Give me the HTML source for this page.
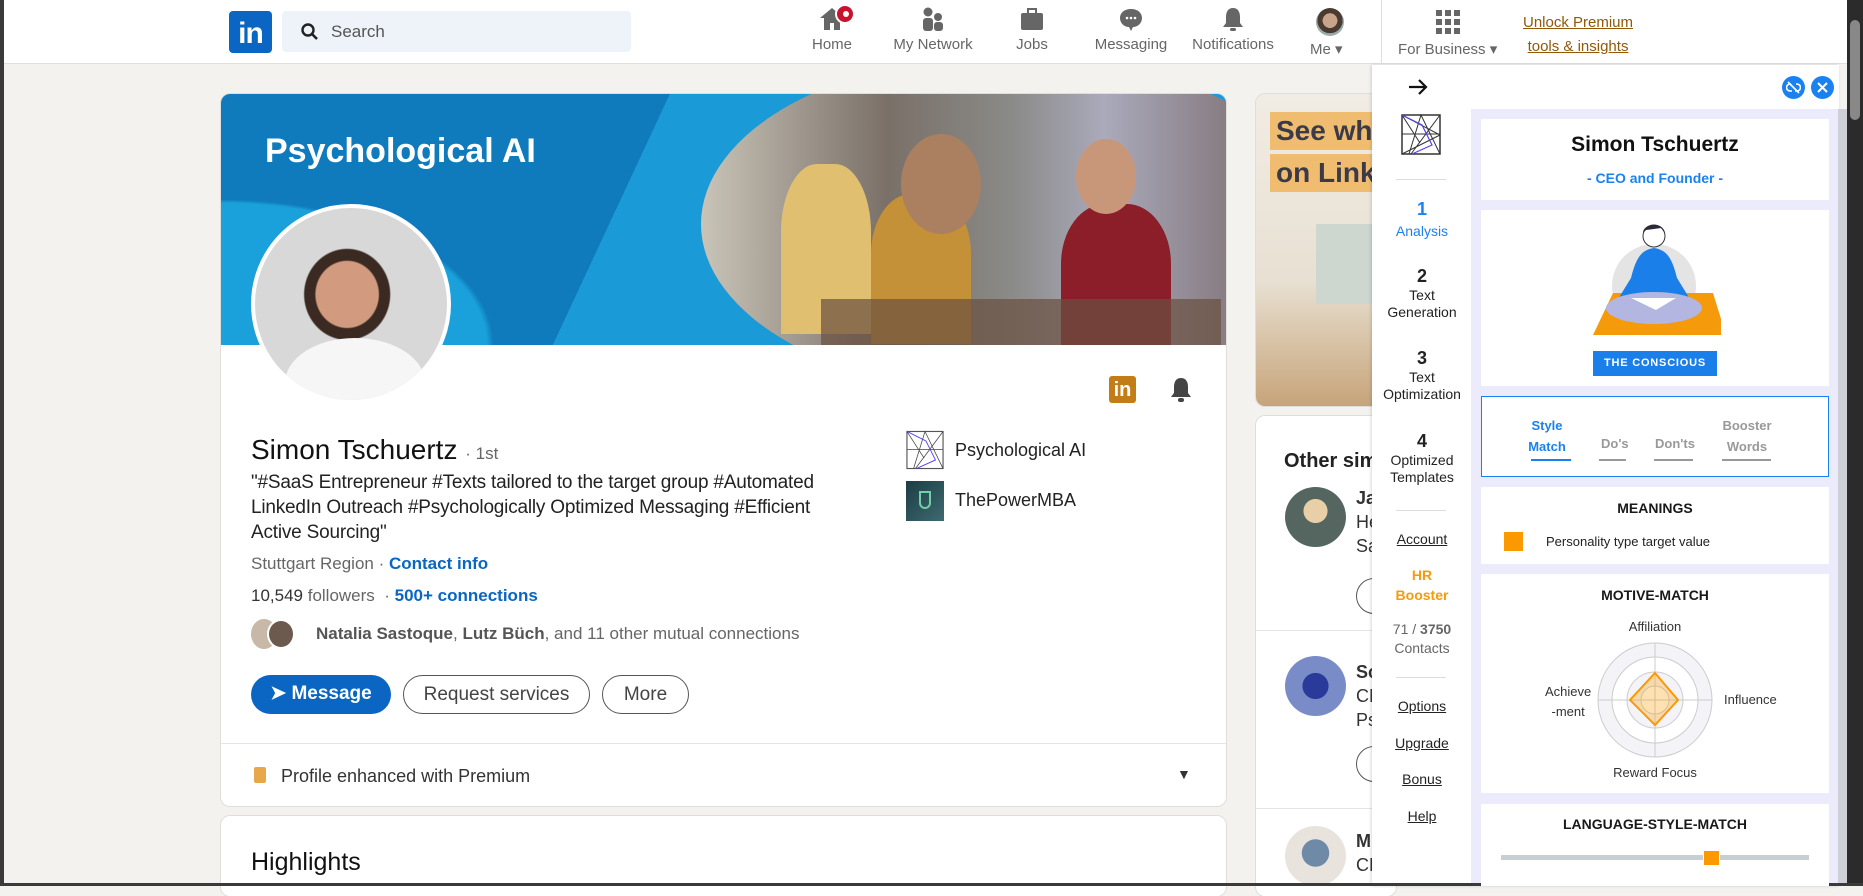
<!DOCTYPE html>
<html><head><meta charset="utf-8"><style>
*{box-sizing:border-box;margin:0;padding:0}
body{width:1863px;height:886px;overflow:hidden;background:#f4f2ee;font-family:"Liberation Sans",sans-serif;position:relative;color:#191919}
.a{position:absolute}
.nav{left:0;top:0;width:1847px;height:64px;background:#fff;border-bottom:1px solid #e0dfdc}
.ni{position:absolute;top:6px;width:90px;text-align:center;font-size:15px;color:#666}
.ni svg{display:block;margin:0 auto 4px}
.card{background:#fff;border-radius:9px;box-shadow:0 0 0 1px #dfdeda}
.btn{position:absolute;top:675px;height:39px;border-radius:20px;font-size:19px;font-weight:bold;line-height:37px;text-align:center}
.sb{position:absolute;left:1372px;width:100px;text-align:center;font-size:14px;color:#222}
.sb u{text-decoration:underline}
.pc{position:absolute;left:1481px;width:348px;background:#fff}
.t{position:absolute;width:100%;text-align:center;font-weight:bold;font-size:15px}
</style></head><body>
<div class="a nav"></div>
<div class="a" style="left:0;top:0;width:4px;height:886px;background:#3a3a3a"></div>
<div class="a" style="left:229px;top:11px;width:43px;height:42px;background:#0a66c2;border-radius:4px;color:#fff;font-weight:bold;font-size:30px;line-height:46px;text-align:center;letter-spacing:-1px">in</div>
<div class="a" style="left:282px;top:11px;width:349px;height:41px;background:#edf3f8;border-radius:4px"></div>
<svg class="a" style="left:300px;top:22px" width="20" height="20" viewBox="0 0 20 20"><circle cx="8" cy="8" r="5.5" fill="none" stroke="#222" stroke-width="2.4"/><path d="M12 12l5 5" stroke="#222" stroke-width="2.6"/></svg>
<div class="a" style="left:331px;top:22px;font-size:17px;color:#555">Search</div>
<div class="ni" style="left:787px"><svg width="28" height="26" viewBox="0 0 28 26"><path d="M14 2L2 12h4v12h6v-7h4v7h6V12h4z" fill="#666"/></svg>Home</div>
<div class="a" style="left:835px;top:4px;width:20px;height:20px;border-radius:50%;background:#cb112d;border:2px solid #fff"></div>
<div class="a" style="left:843px;top:11px;width:6px;height:6px;border-radius:50%;background:#fff"></div>
<div class="ni" style="left:888px"><svg width="28" height="26" viewBox="0 0 28 26"><circle cx="9" cy="6" r="4.5" fill="#666"/><circle cx="19" cy="11" r="4" fill="#666"/><rect x="4" y="12" width="10" height="13" rx="3" fill="#666"/><rect x="15" y="16" width="9" height="9" rx="3" fill="#666"/></svg>My Network</div>
<div class="ni" style="left:987px"><svg width="28" height="26" viewBox="0 0 28 26"><rect x="3" y="7" width="22" height="17" rx="2" fill="#666"/><rect x="10" y="3" width="8" height="5" fill="none" stroke="#666" stroke-width="2"/></svg>Jobs</div>
<div class="ni" style="left:1086px"><svg width="28" height="26" viewBox="0 0 28 26"><path d="M14 3C7 3 3 7 3 12s4 9 9 9l2 4 2-4c5 0 9-4 9-9s-4-9-11-9z" fill="#666"/><circle cx="10" cy="12" r="1.3" fill="#fff"/><circle cx="14" cy="12" r="1.3" fill="#fff"/><circle cx="18" cy="12" r="1.3" fill="#fff"/></svg>Messaging</div>
<div class="ni" style="left:1187px;width:92px"><svg width="28" height="26" viewBox="0 0 28 26"><path d="M14 2c-5 0-7 4-7 9v6l-3 4h20l-3-4v-6c0-5-2-9-7-9z" fill="#666"/><rect x="11" y="22" width="6" height="3" rx="1.5" fill="#666"/></svg>Notifications</div>
<div class="a" style="left:1316px;top:8px;width:28px;height:28px;border-radius:50%;background:radial-gradient(circle at 50% 45%,#c9a48c 0 35%,#4a3a30 36% 60%,#9aa 61%)"></div>
<div class="a" style="left:1310px;top:40px;font-size:15px;color:#666">Me &#9662;</div>
<div class="a" style="left:1381px;top:0;width:1px;height:64px;background:#e0dfdc"></div>
<svg class="a" style="left:1436px;top:10px" width="24" height="24" viewBox="0 0 24 24" fill="#666"><rect x="0" y="0" width="6" height="6"/><rect x="9" y="0" width="6" height="6"/><rect x="18" y="0" width="6" height="6"/><rect x="0" y="9" width="6" height="6"/><rect x="9" y="9" width="6" height="6"/><rect x="18" y="9" width="6" height="6"/><rect x="0" y="18" width="6" height="6"/><rect x="9" y="18" width="6" height="6"/><rect x="18" y="18" width="6" height="6"/></svg>
<div class="a" style="left:1398px;top:40px;font-size:15px;color:#666">For Business &#9662;</div>
<div class="a" style="left:1523px;top:11px;font-size:15px;color:#915907;text-decoration:underline;line-height:24px;text-align:center">Unlock Premium<br>tools &amp; insights</div>

<div class="a card" style="left:221px;top:94px;width:1005px;height:712px;overflow:hidden">
 <div class="a" style="left:0;top:0;width:1005px;height:251px;overflow:hidden;background:linear-gradient(115deg,#0f7bbd 0 40%,#1a9ad6 40%)">
 <div class="a" style="left:0;top:0;width:470px;height:251px;background:radial-gradient(ellipse at 0% 100%,#1aa0da 0 40%,transparent 41%)"></div>
 <div class="a" style="left:480px;top:-40px;width:620px;height:340px;border-radius:50%;background:linear-gradient(90deg,#c9c4b8,#7a7068 30%,#8a8a88 50%,#aab 65%,#6d5a58)"></div>
 <div class="a" style="left:560px;top:70px;width:90px;height:170px;border-radius:40% 40% 0 0;background:#e0c070"></div>
 <div class="a" style="left:650px;top:100px;width:100px;height:150px;border-radius:40% 40% 0 0;background:#c49038"></div>
 <div class="a" style="left:680px;top:40px;width:80px;height:100px;border-radius:50%;background:#ab8060"></div>
 <div class="a" style="left:840px;top:110px;width:110px;height:150px;border-radius:40% 40% 0 0;background:#8b1e28"></div>
 <div class="a" style="left:855px;top:45px;width:60px;height:75px;border-radius:50%;background:#c8977a"></div>
 <div class="a" style="left:600px;top:205px;width:400px;height:50px;background:#6a5040;opacity:.7"></div>
 <div class="a" style="left:44px;top:38px;font-size:34px;font-weight:bold;color:#fff">Psychological AI</div>
 </div>
 <div class="a" style="left:30px;top:110px;width:200px;height:200px;border-radius:50%;border:4px solid #fff;background:radial-gradient(ellipse at 48% 45%,#d29a7e 0 22%,#3a2a22 23% 30%,#d8d8d8 31%);overflow:hidden"><div class="a" style="left:30px;top:130px;width:140px;height:90px;border-radius:50% 50% 0 0;background:#f6f6f6"></div></div>
 <div class="a" style="left:888px;top:282px;width:27px;height:27px;background:#c37d16;border-radius:3px;color:#fff;font-weight:bold;font-size:20px;line-height:29px;text-align:center">in</div>
 <svg class="a" style="left:948px;top:282px" width="24" height="28" viewBox="0 0 24 28"><path d="M12 2c-5 0-7 4-7 9v6l-3 4h20l-3-4v-6c0-5-2-9-7-9z" fill="#444"/><rect x="9" y="22" width="6" height="4" rx="2" fill="#444"/></svg>
 <div class="a" style="left:30px;top:340px;font-size:28px;color:#111">Simon Tschuertz <span style="font-size:17px;color:#666">· 1st</span></div>
 <div class="a" style="left:30px;top:376px;width:610px;font-size:19px;line-height:25px;color:#222;letter-spacing:-0.2px">"#SaaS Entrepreneur #Texts tailored to the target group #Automated LinkedIn Outreach #Psychologically Optimized Messaging #Efficient Active Sourcing"</div>
 <div class="a" style="left:30px;top:460px;font-size:17px;color:#666">Stuttgart Region · <b style="color:#0a66c2">Contact info</b></div>
 <div class="a" style="left:30px;top:492px;font-size:17px;color:#666"><span style="color:#333">10,549</span> followers &nbsp;· <b style="color:#0a66c2">500+ connections</b></div>
 <div class="a" style="left:30px;top:525px;width:26px;height:30px;border-radius:50%;background:#c8b8a8"></div>
 <div class="a" style="left:46px;top:525px;width:28px;height:30px;border-radius:50%;background:#6d5a4e;border:2px solid #fff"></div>
 <div class="a" style="left:95px;top:530px;font-size:17px;color:#666"><b style="color:#555">Natalia Sastoque</b>, <b style="color:#555">Lutz Büch</b>, and 11 other mutual connections</div>
 <div class="a" style="left:0;top:649px;width:1005px;height:1px;background:#e5e5e5"></div>
 <div class="a" style="left:33px;top:673px;width:12px;height:16px;background:#e8a84a;border-radius:2px"></div>
 <div class="a" style="left:60px;top:672px;font-size:18px;color:#333">Profile enhanced with Premium</div>
 <div class="a" style="left:956px;top:672px;font-size:14px;color:#333">&#9660;</div>
 <div class="a" style="left:640px;top:322px;width:48px;height:48px"></div>
</div>
<svg class="a" style="left:906px;top:430px" width="38" height="40" viewBox="0 0 40 41"><rect x="1" y="1" width="38" height="39" fill="#fff" stroke="#555" stroke-width="1.2"/><path d="M1 1l18 28M1 20h38M8 40L20 1l19 39M39 1L10 40" fill="none" stroke="#444" stroke-width="0.8"/><path d="M1 1l20 10 10 20L11 40" fill="none" stroke="#5544ee" stroke-width="1"/></svg>
<div class="a" style="left:955px;top:440px;font-size:18px;color:#222">Psychological AI</div>
<div class="a" style="left:906px;top:481px;width:38px;height:40px;background:linear-gradient(135deg,#1e3c44,#3d6a70)"><div class="a" style="left:13px;top:10px;width:12px;height:18px;border:2px solid #6fd0a8;border-radius:0 0 6px 6px"></div></div>
<div class="a" style="left:955px;top:490px;font-size:18px;color:#222">ThePowerMBA</div>
<div class="btn" style="left:251px;width:140px;background:#0a66c2;color:#fff">&#10148; Message</div>
<div class="btn" style="left:403px;width:187px;border:1.5px solid #555;color:#444;font-weight:normal">Request services</div>
<div class="btn" style="left:602px;width:87px;border:1.5px solid #555;color:#444;font-weight:normal">More</div>
<div class="a card" style="left:221px;top:816px;width:1005px;height:80px"><div class="a" style="left:30px;top:32px;font-size:25px;color:#111">Highlights</div></div>

<div class="a card" style="left:1256px;top:94px;width:140px;height:312px;overflow:hidden;background:linear-gradient(180deg,#f1ece4 0,#e8e0d2 60%,#c7a47a 100%)">
 <div class="a" style="left:14px;top:18px;width:130px;height:38px;background:#f0bd70"></div>
 <div class="a" style="left:14px;top:60px;width:130px;height:38px;background:#f0bd70"></div>
 <div class="a" style="left:20px;top:16px;font-size:28px;font-weight:bold;color:#3a3a48;line-height:42px">See wh<br>on Link</div>
 <div class="a" style="left:60px;top:130px;width:80px;height:80px;background:#cdd6cf"></div>
</div>
<div class="a card" style="left:1256px;top:416px;width:140px;height:480px">
 <div class="a" style="left:28px;top:34px;font-size:20px;font-weight:bold;color:#222">Other sim</div>
 <div class="a" style="left:29px;top:71px;width:61px;height:60px;border-radius:50%;background:radial-gradient(circle at 50% 40%,#e8cfa8 0 25%,#556660 26%)"></div>
 <div class="a" style="left:100px;top:70px;font-size:18px;line-height:24px;color:#333"><b>Ja</b><br>He<br>Sa</div>
 <div class="a" style="left:100px;top:162px;width:50px;height:36px;border:1.5px solid #555;border-radius:18px"></div>
 <div class="a" style="left:0;top:214px;width:140px;height:1px;background:#e5e5e5"></div>
 <div class="a" style="left:29px;top:240px;width:61px;height:60px;border-radius:50%;background:radial-gradient(circle at 50% 50%,#2a3a9a 0 30%,#7a8cc8 31%)"></div>
 <div class="a" style="left:100px;top:244px;font-size:18px;line-height:24px;color:#333"><b>Sc</b><br>CN<br>Ps</div>
 <div class="a" style="left:100px;top:330px;width:50px;height:36px;border:1.5px solid #555;border-radius:18px"></div>
 <div class="a" style="left:0;top:392px;width:140px;height:1px;background:#e5e5e5"></div>
 <div class="a" style="left:29px;top:410px;width:61px;height:60px;border-radius:50%;background:radial-gradient(circle at 50% 45%,#6e8aa6 0 30%,#e8e3dc 31%)"></div>
 <div class="a" style="left:100px;top:413px;font-size:18px;line-height:24px;color:#333"><b>M</b><br>CE</div>
</div>

<div class="a" style="left:1372px;top:65px;width:467px;height:821px;background:#fff;box-shadow:-1px 0 3px rgba(0,0,0,.15)"></div>
<div class="a" style="left:1471px;top:109px;width:368px;height:777px;background:#ecebfb"></div>
<div class="a" style="left:1838px;top:109px;width:9px;height:777px;background:#cfcfd8"></div>
<div class="a" style="left:1847px;top:0;width:16px;height:886px;background:#2b2b2b"></div>
<div class="a" style="left:1850px;top:20px;width:10px;height:100px;background:#888;border-radius:5px"></div>
<div class="a" style="left:0;top:883px;width:1863px;height:3px;background:#3a3a3a"></div>
<svg class="a" style="left:1407px;top:78px" width="22" height="18" viewBox="0 0 22 18"><path d="M2 9h17M12 2l7 7-7 7" fill="none" stroke="#111" stroke-width="2.2"/></svg>
<div class="a" style="left:1782px;top:76px;width:23px;height:23px;border-radius:50%;background:#1a82f0"></div>
<svg class="a" style="left:1786px;top:80px" width="15" height="15" viewBox="0 0 15 15"><path d="M5 4H4a3 3 0 000 7h2M10 4h1a3 3 0 010 7H9M2 2l11 11" fill="none" stroke="#fff" stroke-width="1.6"/></svg>
<div class="a" style="left:1811px;top:76px;width:23px;height:23px;border-radius:50%;background:#1a82f0"></div>
<svg class="a" style="left:1816px;top:81px" width="13" height="13" viewBox="0 0 13 13"><path d="M2 2l9 9M11 2l-9 9" stroke="#fff" stroke-width="2"/></svg>
<svg class="a" style="left:1401px;top:114px" width="40" height="41" viewBox="0 0 40 41"><rect x="1" y="1" width="38" height="39" fill="none" stroke="#333" stroke-width="1.5"/><path d="M1 1l18 28M1 20h38M8 40L20 1l19 39M39 1L10 40M1 1l38 20M1 40l38-19" fill="none" stroke="#333" stroke-width="1"/><path d="M1 1l20 10 10 20L11 40" fill="none" stroke="#5544ee" stroke-width="1.2"/></svg>
<div class="a" style="left:1396px;top:179px;width:50px;height:1px;background:#ddd"></div>
<div class="sb" style="top:199px;color:#1a82f0"><b style="font-size:18px">1</b><br><span style="line-height:22px">Analysis</span></div>
<div class="sb" style="top:266px"><b style="font-size:18px">2</b><br><span style="line-height:17px">Text<br>Generation</span></div>
<div class="sb" style="top:348px"><b style="font-size:18px">3</b><br><span style="line-height:17px">Text<br>Optimization</span></div>
<div class="sb" style="top:431px"><b style="font-size:18px">4</b><br><span style="line-height:17px">Optimized<br>Templates</span></div>
<div class="a" style="left:1396px;top:510px;width:50px;height:1px;background:#ddd"></div>
<div class="sb" style="top:531px"><u>Account</u></div>
<div class="sb" style="top:565px;color:#f79a0b;font-weight:bold;line-height:20px">HR<br>Booster</div>
<div class="sb" style="top:620px;color:#666;line-height:19px">71 / <b>3750</b><br>Contacts</div>
<div class="a" style="left:1396px;top:677px;width:50px;height:1px;background:#ddd"></div>
<div class="sb" style="top:698px"><u>Options</u></div>
<div class="sb" style="top:735px"><u>Upgrade</u></div>
<div class="sb" style="top:771px"><u>Bonus</u></div>
<div class="sb" style="top:808px"><u>Help</u></div>

<div class="pc" style="top:119px;height:81px"><div class="t" style="top:14px;font-size:21px;color:#111">Simon Tschuertz</div><div class="t" style="top:51px;font-size:14px;color:#1a82f0">- CEO and Founder -</div></div>
<div class="pc" style="top:210px;height:176px">
 <svg class="a" style="left:110px;top:8px" width="130" height="125" viewBox="0 0 130 125"><circle cx="63" cy="68" r="42" fill="#e4e4e4"/><path d="M22 75h100l13 42H2z" fill="#f59a0b"/><path d="M40 60c5-20 10-28 23-30 13 2 18 10 23 30l16 26H24z" fill="#1a7fe8"/><ellipse cx="63" cy="90" rx="48" ry="16" fill="#b3b6e0"/><path d="M40 80l25 12 20-12" fill="#fff"/><circle cx="63" cy="18" r="11" fill="#fff" stroke="#333"/><path d="M52 15c0-10 20-12 22 0l-4-5-15 2z" fill="#2a2a3a"/></svg>
 <div class="a" style="left:112px;top:141px;width:124px;height:25px;background:#1a7fe8;color:#fff;font-weight:bold;font-size:11px;letter-spacing:.8px;line-height:25px;text-align:center">THE CONSCIOUS</div>
</div>
<div class="pc" style="top:396px;height:81px;border:1.5px solid #1a82f0">
 <div class="a" style="left:45px;top:18px;width:40px;text-align:center;font-size:13px;font-weight:bold;color:#1a82f0;line-height:21px">Style Match</div>
 <div class="a" style="left:49px;top:62px;width:40px;height:2px;background:#1a82f0"></div>
 <div class="a" style="left:119px;top:39px;font-size:13px;font-weight:bold;color:#999">Do's</div><div class="a" style="left:117px;top:62px;width:27px;height:2px;background:#999"></div>
 <div class="a" style="left:173px;top:39px;font-size:13px;font-weight:bold;color:#999">Don'ts</div><div class="a" style="left:172px;top:62px;width:39px;height:2px;background:#999"></div>
 <div class="a" style="left:240px;top:18px;width:50px;text-align:center;font-size:13px;font-weight:bold;color:#999;line-height:21px">Booster Words</div><div class="a" style="left:240px;top:62px;width:49px;height:2px;background:#999"></div>
</div>
<div class="pc" style="top:487px;height:77px"><div class="t" style="top:13px;font-size:14px">MEANINGS</div><div class="a" style="left:23px;top:45px;width:19px;height:19px;background:#fb9a00"></div><div class="a" style="left:65px;top:47px;font-size:13px;color:#222">Personality type target value</div></div>
<div class="pc" style="top:574px;height:219px">
 <div class="t" style="top:13px;font-size:14px">MOTIVE-MATCH</div>
 <div class="t" style="top:45px;font-size:13px;font-weight:normal;color:#333">Affiliation</div>
 <svg class="a" style="left:116px;top:68px" width="116" height="116" viewBox="0 0 116 116"><circle cx="58" cy="58" r="57" fill="#f4f4f8" stroke="#ccc"/><circle cx="58" cy="58" r="43" fill="#fff" stroke="#ccc"/><circle cx="58" cy="58" r="28" fill="#f4f4f8" stroke="#ccc"/><circle cx="58" cy="58" r="14" fill="#fff" stroke="#ccc"/><path d="M58 1v114M1 58h114" stroke="#ccc"/><path d="M58 31l23 27-23 25-25-25z" fill="rgba(251,154,0,.3)" stroke="#fb9a00" stroke-width="2"/></svg>
 <div class="a" style="left:64px;top:108px;font-size:13px;color:#333;text-align:center;line-height:20px">Achieve<br>-ment</div>
 <div class="a" style="left:243px;top:118px;font-size:13px;color:#333">Influence</div>
 <div class="t" style="top:191px;font-size:13px;font-weight:normal;color:#333">Reward Focus</div>
</div>
<div class="pc" style="top:804px;height:82px"><div class="t" style="top:12px;font-size:14px">LANGUAGE-STYLE-MATCH</div><div class="a" style="left:20px;top:51px;width:308px;height:5px;background:#c9cdd4"></div><div class="a" style="left:222px;top:46px;width:17px;height:16px;background:#fb9a00;border:1px solid #fff"></div></div>
</body></html>
